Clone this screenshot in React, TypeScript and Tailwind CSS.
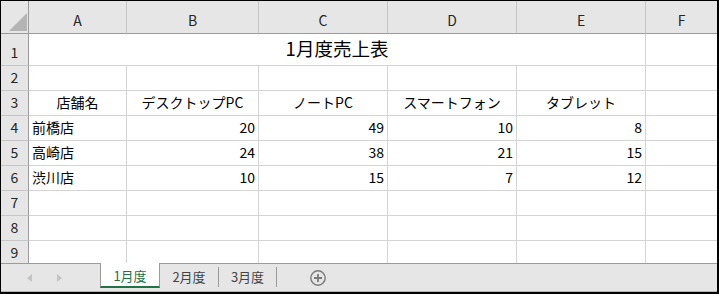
import React from 'react';

const cols = ['A', 'B', 'C', 'D', 'E', 'F'];

type Val = { text: string; align: 'l' | 'c' | 'r' } | null;

const rows: Val[][] = [
    [null, null, null, null, null, null],
    [
        { text: '店舗名', align: 'c' },
        { text: 'デスクトップPC', align: 'c' },
        { text: 'ノートPC', align: 'c' },
        { text: 'スマートフォン', align: 'c' },
        { text: 'タブレット', align: 'c' },
        null,
    ],
    [{ text: '前橋店', align: 'l' }, { text: '20', align: 'r' }, { text: '49', align: 'r' }, { text: '10', align: 'r' }, { text: '8', align: 'r' }, null],
    [{ text: '高崎店', align: 'l' }, { text: '24', align: 'r' }, { text: '38', align: 'r' }, { text: '21', align: 'r' }, { text: '15', align: 'r' }, null],
    [{ text: '渋川店', align: 'l' }, { text: '10', align: 'r' }, { text: '15', align: 'r' }, { text: '7', align: 'r' }, { text: '12', align: 'r' }, null],
    [null, null, null, null, null, null],
    [null, null, null, null, null, null],
    [null, null, null, null, null, null],
];

const alignClass = {
    l: 'justify-start pl-[3px]',
    c: 'justify-center',
    r: 'justify-end pr-[3px]',
};

const App: React.FC = () => {
    return (
        <div className="w-[719px] h-[294px] bg-white border-l border-t border-r-2 border-b-2 border-black flex flex-col overflow-hidden font-['Noto_Sans_CJK_JP',sans-serif] text-black">
            <div className="grid grid-cols-[28px_98px_132px_129px_129px_129px_71px] grid-rows-[33px_32px_repeat(7,25px)_22px] h-[262px] overflow-hidden">
                {/* corner */}
                <div className="bg-[#e6e6e6] border-r border-b border-[#9b9b9b] flex items-end justify-end pr-[1px] pb-[2px]">
                    <svg width="18" height="18" viewBox="0 0 18 18">
                        <polygon points="18,0 18,18 0,18" fill="#b4b4b4" />
                    </svg>
                </div>
                {cols.map((c, i) => (
                    <div
                        key={c}
                        className={`bg-[#e6e6e6] border-b border-b-[#9b9b9b] flex justify-center pt-[9px] text-[14px] leading-[20px] text-[#262626] ${i < 5 ? 'border-r border-r-[#c6c6c6]' : ''}`}
                    >
                        {c}
                    </div>
                ))}

                {/* row 1 with merged title */}
                <div className="bg-[#e6e6e6] border-r border-r-[#9b9b9b] border-b border-b-[#c6c6c6] flex items-end justify-center pb-[3px] text-[14px] leading-[20px] text-[#262626]">
                    1
                </div>
                <div className="col-span-5 border-r border-b border-[#d4d4d4] flex items-end justify-center pb-[5px] text-[18.5px] leading-[24px]">
                    1月度売上表
                </div>
                <div className="border-b border-[#d4d4d4]" />

                {rows.map((row, r) => (
                    <React.Fragment key={r}>
                        <div
                            className={`bg-[#e6e6e6] border-r border-r-[#9b9b9b] flex items-end justify-center text-[14px] leading-[20px] text-[#262626] ${r < 7 ? 'border-b border-b-[#c6c6c6] pb-[3px]' : 'pb-[1px]'}`}
                        >
                            {r + 2}
                        </div>
                        {row.map((v, i) => (
                            <div
                                key={i}
                                className={`flex items-end pb-[3px] text-[14px] leading-[20px] whitespace-nowrap border-[#d4d4d4] ${r < 7 ? 'border-b' : ''} ${i < 5 ? 'border-r' : ''} ${v ? alignClass[v.align] : ''}`}
                            >
                                {v?.text}
                            </div>
                        ))}
                    </React.Fragment>
                ))}
            </div>

            {/* sheet tabs */}
            <div className="h-[29px] flex bg-[#e6e6e6] border-t border-t-[#9b9b9b] border-b border-b-[#b4b4b4]">
                <div className="w-[99px] flex items-center pl-[26px] gap-[25px]">
                    <svg width="5" height="8" viewBox="0 0 5 8">
                        <polygon points="5,0 5,8 0,4" fill="#c4c4c4" />
                    </svg>
                    <svg width="5" height="8" viewBox="0 0 5 8">
                        <polygon points="0,0 0,8 5,4" fill="#c4c4c4" />
                    </svg>
                </div>
                <div className="-mt-px w-[60px] h-[25px] bg-white border-l border-r border-[#9b9b9b] border-b-2 border-b-[#217346] flex items-center justify-center pt-[2px] text-[13px] leading-[18px] text-[#217346]">
                    1月度
                </div>
                <div className="w-[58px] h-[24px] flex items-center justify-center pt-[2px] text-[13px] leading-[18px] text-[#444]">
                    2月度
                </div>
                <div className="w-px h-[20px] mt-[3px] bg-[#9b9b9b]" />
                <div className="w-[57px] h-[24px] flex items-center justify-center pt-[2px] text-[13px] leading-[18px] text-[#444]">
                    3月度
                </div>
                <div className="w-px h-[20px] mt-[3px] bg-[#9b9b9b]" />
                <div className="ml-[33px] flex items-center">
                    <svg width="16" height="16" viewBox="0 0 16 16" fill="none" stroke="#7a7a7a" strokeWidth="1.4">
                        <circle cx="8" cy="8" r="7.2" />
                        <path d="M8 4v8M4 8h8" strokeWidth="1.8" />
                    </svg>
                </div>
            </div>
        </div>
    );
};

export default App;
